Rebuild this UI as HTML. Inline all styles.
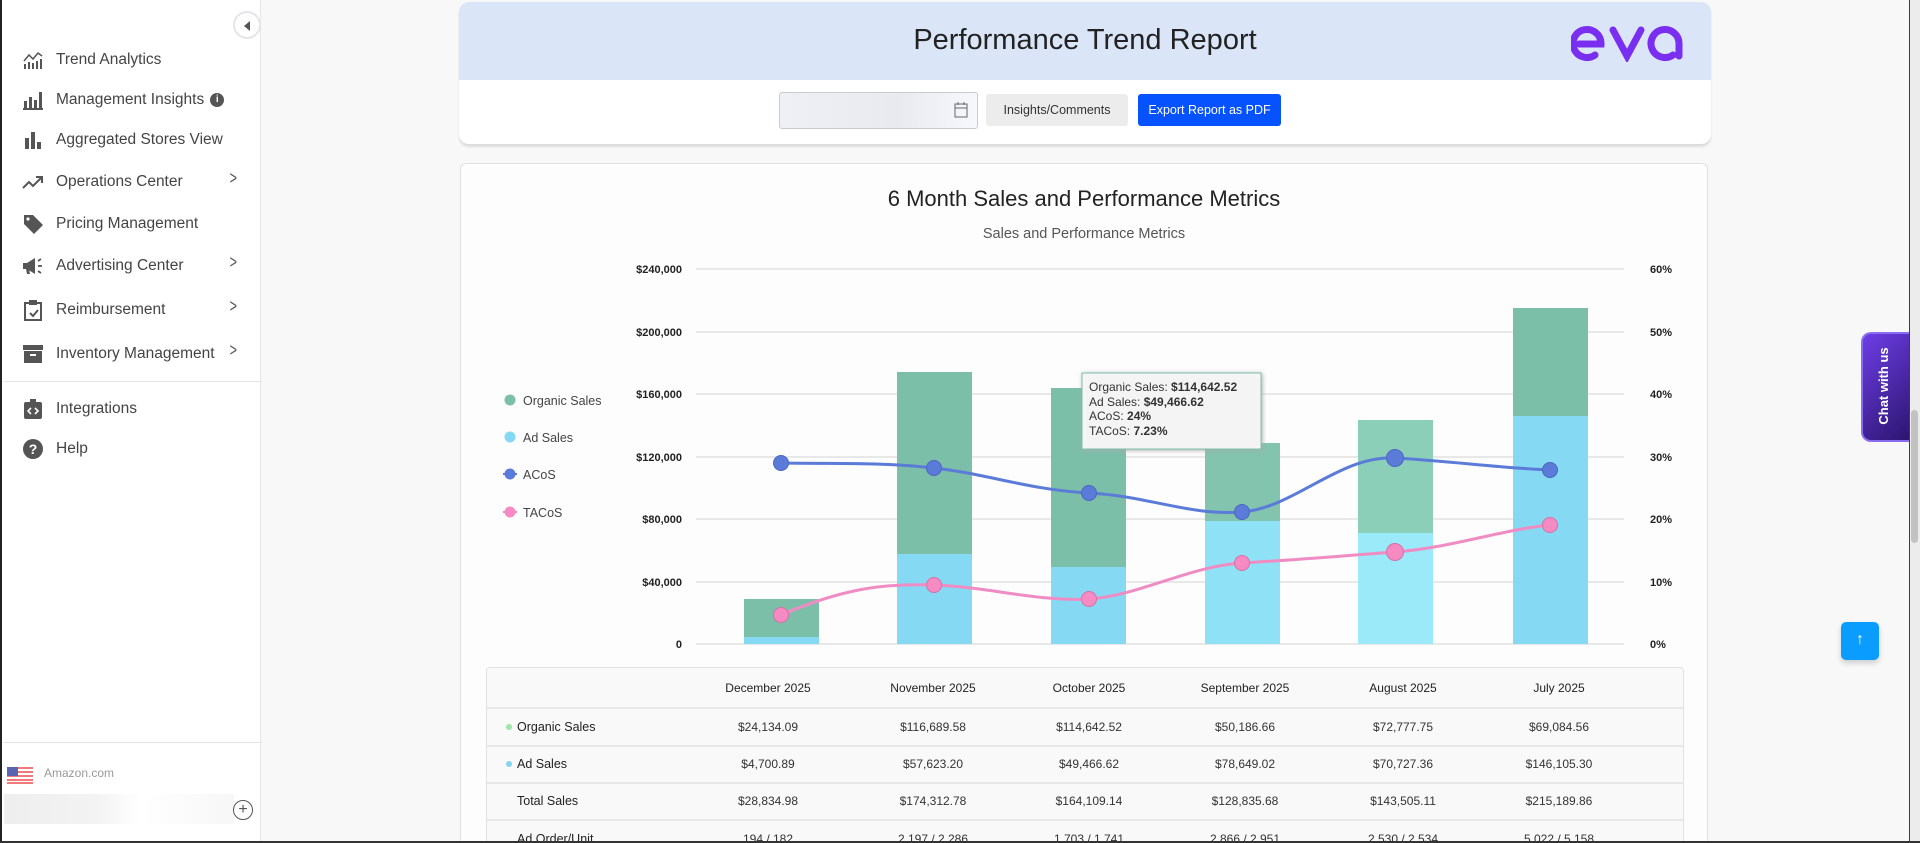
<!DOCTYPE html>
<html><head><meta charset="utf-8"><style>
*{box-sizing:border-box;margin:0;padding:0}
html,body{width:1920px;height:843px;overflow:hidden}
body{background:#f8f8f8;font-family:"Liberation Sans",sans-serif;color:#333;position:relative}
.side{position:absolute;left:0;top:0;width:261px;height:843px;background:#fff;border-left:2px solid #222;border-right:1px solid #e6e6e6}
.item{position:absolute;left:20px;display:flex;align-items:center;font-size:15.5px;color:#444;height:24px}
.item svg{width:22px;height:22px;margin-right:12px;fill:#555}
.chev{position:absolute;left:226px;font-size:18px;color:#555;transform:scaleX(.7)}
.abs{position:absolute}
</style></head><body>
<div class="side">
 <div class="abs" style="left:231px;top:11px;width:28px;height:28px;border-radius:50%;border:2px solid #e4e4ea;background:#fff"><div class="abs" style="left:9px;top:8px;border-right:6px solid #555;border-top:5px solid transparent;border-bottom:5px solid transparent"></div></div>
 <div class="item" style="top:48px"><svg viewBox="0 0 22 22"><path d="M2 12l5-6 4 4 5-6 4 3" stroke="#555" stroke-width="1.5" fill="none"/><rect x="2" y="15" width="2" height="5"/><rect x="6" y="13" width="2" height="7"/><rect x="10" y="14" width="2" height="6"/><rect x="14" y="12" width="2" height="8"/><rect x="18" y="10" width="2" height="10"/></svg>Trend Analytics</div>
 <div class="item" style="top:88px"><svg viewBox="0 0 22 22"><rect x="1" y="19" width="20" height="2"/><rect x="2" y="12" width="3" height="7"/><rect x="7" y="8" width="3" height="11"/><rect x="12" y="11" width="3" height="8"/><rect x="17" y="3" width="3" height="16"/></svg>Management Insights <span style="display:inline-block;width:14px;height:14px;border-radius:50%;background:#555;color:#fff;font-size:10px;text-align:center;line-height:14px;margin-left:6px;font-weight:bold">i</span></div>
 <div class="item" style="top:128px"><svg viewBox="0 0 22 22"><rect x="3" y="9" width="4" height="11"/><rect x="9" y="3" width="4" height="17"/><rect x="15" y="13" width="4" height="7"/></svg>Aggregated Stores View</div>
 <div class="item" style="top:170px"><svg viewBox="0 0 22 22"><path d="M1 17l6-6 4 4 8-8M14 6h6v6" stroke="#555" stroke-width="2" fill="none"/></svg>Operations Center</div><div class="chev" style="top:168px">&gt;</div>
 <div class="item" style="top:212px"><svg viewBox="0 0 22 22"><path d="M2 2h9l10 10-9 9L2 11z"/><circle cx="6" cy="6" r="1.6" fill="#fff"/></svg>Pricing Management</div>
 <div class="item" style="top:254px"><svg viewBox="0 0 22 22"><path d="M1 8h4l8-5v16l-8-5H1zM4 14h3l1 5H5z"/><path d="M16 11h4M16 6l3-2M16 16l3 2" stroke="#555" stroke-width="1.8"/></svg>Advertising Center</div><div class="chev" style="top:252px">&gt;</div>
 <div class="item" style="top:298px"><svg viewBox="0 0 22 22"><path d="M3 4h16v17H3z" stroke="#555" stroke-width="2" fill="none"/><rect x="7" y="1" width="8" height="5"/><path d="M8 14l3 3 5-6" stroke="#555" stroke-width="2" fill="none"/></svg>Reimbursement</div><div class="chev" style="top:296px">&gt;</div>
 <div class="item" style="top:342px"><svg viewBox="0 0 22 22"><rect x="1" y="2" width="20" height="5"/><rect x="2" y="8" width="18" height="12"/><rect x="8" y="11" width="6" height="2" fill="#fff"/></svg>Inventory Management</div><div class="chev" style="top:340px">&gt;</div>
 <div class="abs" style="left:2px;top:381px;width:258px;height:1px;background:#e3e3e3"></div>
 <div class="item" style="top:397px"><svg viewBox="0 0 22 22"><rect x="2" y="4" width="18" height="17" rx="2"/><rect x="8" y="1" width="6" height="4"/><path d="M9 10l-3 3 3 3M13 10l3 3-3 3" stroke="#fff" stroke-width="1.6" fill="none"/></svg>Integrations</div>
 <div class="item" style="top:437px"><svg viewBox="0 0 22 22"><circle cx="11" cy="11" r="10"/><text x="11" y="16" text-anchor="middle" font-size="14" font-weight="bold" fill="#fff" font-family="Liberation Sans">?</text></svg>Help</div>
 <div class="abs" style="left:2px;top:742px;width:258px;height:1px;background:#e3e3e3"></div>
 <svg class="abs" style="left:5px;top:767px" width="26" height="17" viewBox="0 0 26 17"><rect width="26" height="17" fill="#fff"/><g fill="#f07a7a"><rect y="0" width="26" height="2"/><rect y="4" width="26" height="2"/><rect y="8" width="26" height="2"/><rect y="12" width="26" height="2"/><rect y="15" width="26" height="2"/></g><rect width="11" height="9" fill="#5a63b0"/></svg>
 <div class="abs" style="left:42px;top:766px;font-size:12px;color:#999">Amazon.com</div>
 <div class="abs" style="left:2px;top:794px;width:230px;height:30px;background:linear-gradient(90deg,#eee,#f3f3f3 40%,#fff 60%,#f7f7f7)"></div>
 <div class="abs" style="left:231px;top:800px;width:20px;height:20px;border-radius:50%;border:1px solid #555;text-align:center;line-height:17px;font-size:16px;color:#555">+</div>
</div>

<div class="abs" style="left:459px;top:2px;width:1252px;height:142px;background:#fff;border-radius:10px;box-shadow:0 3px 2px #ddd">
 <div class="abs" style="left:0;top:0;width:1252px;height:78px;background:#dae6f8;border-radius:10px 10px 0 0"></div>
 <div class="abs" style="left:0;top:22px;width:1252px;text-align:center;font-size:29px;color:#222">Performance Trend Report</div>
 <svg class="abs" style="left:1112px;top:20px" width="120" height="40" viewBox="0 0 120 40"><g fill="none" stroke="#7a2ff0" stroke-width="7" stroke-linecap="round"><path d="M8 22h22a14 14 0 1 0-6 11"/><path d="M42 8l14 26 14-26"/><path d="M108 34V22a14 14 0 1 0-6 11"/></g></svg>
 <div class="abs" style="left:320px;top:90px;width:199px;height:37px;border:1px solid #ccc;border-radius:3px;background:linear-gradient(90deg,#eef0f4,#e8eaf0 60%,#f6f8fc)"></div>
 <svg class="abs" style="left:495px;top:100px" width="14" height="16" viewBox="0 0 14 16"><rect x="1" y="2" width="12" height="13" fill="none" stroke="#666"/><path d="M1 6h12M4 0v3M10 0v3" stroke="#666"/></svg>
 <div class="abs" style="left:527px;top:92px;width:142px;height:32px;background:#ececec;border-radius:3px;font-size:12.5px;color:#333;text-align:center;line-height:32px">Insights/Comments</div>
 <div class="abs" style="left:679px;top:92px;width:143px;height:32px;background:#0652ff;border-radius:3px;font-size:12.5px;color:#fff;text-align:center;line-height:32px">Export Report as PDF</div>
</div>

<div class="abs" style="left:460px;top:163px;width:1248px;height:690px;background:#fdfdfd;border:1px solid #e2e2e2;border-radius:6px"></div>
<div class="abs" style="left:460px;top:186px;width:1248px;text-align:center;font-size:22px;color:#222">6 Month Sales and Performance Metrics</div>
<div class="abs" style="left:460px;top:226px;width:1248px;text-align:center;font-size:14.5px;color:#555">Sales and Performance Metrics</div>

<svg class="abs" style="left:0;top:0" width="1920" height="843" font-family="Liberation Sans">
 <g stroke="#e2e2e2" stroke-width="1.5"><line x1="696" x2="1624" y1="269" y2="269"/><line x1="696" x2="1624" y1="332" y2="332"/><line x1="696" x2="1624" y1="394" y2="394"/><line x1="696" x2="1624" y1="457" y2="457"/><line x1="696" x2="1624" y1="519" y2="519"/><line x1="696" x2="1624" y1="582" y2="582"/><line x1="696" x2="1624" y1="644" y2="644"/></g>
 <g font-size="11" font-weight="bold" fill="#222" text-anchor="end"><text x="682" y="273">$240,000</text><text x="682" y="336">$200,000</text><text x="682" y="398">$160,000</text><text x="682" y="461">$120,000</text><text x="682" y="523">$80,000</text><text x="682" y="586">$40,000</text><text x="682" y="648">0</text></g>
 <g font-size="11" font-weight="bold" fill="#222"><text x="1650" y="273">60%</text><text x="1650" y="336">50%</text><text x="1650" y="398">40%</text><text x="1650" y="461">30%</text><text x="1650" y="523">20%</text><text x="1650" y="586">10%</text><text x="1650" y="648">0%</text></g>
 <g fill="#7bbfa9"><rect x="744" y="599" width="75" height="38"/><rect x="897" y="372" width="75" height="182"/><rect x="1051" y="388" width="75" height="179"/><rect x="1205" y="443" width="75" height="78" fill="#82c4ae"/><rect x="1358" y="420" width="75" height="113" fill="#8ccfb9"/><rect x="1513" y="308" width="75" height="108"/></g>
 <g fill="#86d9f2"><rect x="744" y="637" width="75" height="7"/><rect x="897" y="554" width="75" height="90"/><rect x="1051" y="567" width="75" height="77"/><rect x="1205" y="521" width="75" height="123" fill="#8fe2f6"/><rect x="1358" y="533" width="75" height="111" fill="#9aeafa"/><rect x="1513" y="416" width="75" height="228"/></g>
 <path d="M781 463C840 464 880 462 934 468S1030 490 1089 493S1190 516 1242 512S1340 455 1395 458S1500 468 1550 470" stroke="#5b7bd8" stroke-width="3" fill="none"/>
 <path d="M781 615C840 590 880 583 934 585S1040 602 1089 599S1190 566 1242 563S1340 556 1395 552S1500 530 1550 525" stroke="#f08cc4" stroke-width="3" fill="none"/>
 <g fill="#5b7bd8" stroke="#4a66c0"><circle cx="781" cy="463" r="7.5"/><circle cx="934" cy="468" r="7.5"/><circle cx="1089" cy="493" r="7.5"/><circle cx="1242" cy="512" r="7.5"/><circle cx="1395" cy="458" r="8.5"/><circle cx="1550" cy="470" r="7.5"/></g>
 <g fill="#f58bc2" stroke="#d86fa5"><circle cx="781" cy="615" r="7.5"/><circle cx="934" cy="585" r="7.5"/><circle cx="1089" cy="599" r="7.5"/><circle cx="1242" cy="563" r="7.5"/><circle cx="1395" cy="552" r="8.5"/><circle cx="1550" cy="525" r="7.5"/></g>
 <g font-size="12.5" fill="#444"><circle cx="510" cy="400" r="5.5" fill="#7bbfa9"/><text x="523" y="405">Organic Sales</text><circle cx="510" cy="437" r="5.5" fill="#86d9f2"/><text x="523" y="442">Ad Sales</text><circle cx="510" cy="474" r="5.5" fill="#5b7bd8"/><line x1="503" x2="517" y1="474" y2="474" stroke="#5b7bd8" stroke-width="2"/><text x="523" y="479">ACoS</text><circle cx="510" cy="512" r="5.5" fill="#f58bc2"/><line x1="503" x2="517" y1="512" y2="512" stroke="#f58bc2" stroke-width="2"/><text x="523" y="517">TACoS</text></g>
 <rect x="1082" y="373" width="179" height="76" fill="#f9f9f9" fill-opacity=".95" stroke="#7bbfa9" stroke-width="1" style="filter:drop-shadow(1px 1px 2px #aaa)"/>
 <g font-size="12" fill="#333"><text x="1089" y="391">Organic Sales: <tspan font-weight="bold">$114,642.52</tspan></text><text x="1089" y="406">Ad Sales: <tspan font-weight="bold">$49,466.62</tspan></text><text x="1089" y="420">ACoS: <tspan font-weight="bold">24%</tspan></text><text x="1089" y="435">TACoS: <tspan font-weight="bold">7.23%</tspan></text></g>
</svg>

<div class="abs" style="left:486px;top:667px;width:1198px;height:180px;background:#f9f9f9;border:1px solid #e2e2e2;border-radius:4px"></div>
<svg class="abs" style="left:0;top:0" width="1920" height="843" font-family="Liberation Sans">
 <g stroke="#e2e2e2" stroke-width="1.5"><line x1="487" x2="1683" y1="708" y2="708"/><line x1="487" x2="1683" y1="746" y2="746"/><line x1="487" x2="1683" y1="783" y2="783"/><line x1="487" x2="1683" y1="820" y2="820"/></g>
 <g font-size="12" fill="#222" text-anchor="middle"><text x="768" y="692">December 2025</text><text x="933" y="692">November 2025</text><text x="1089" y="692">October 2025</text><text x="1245" y="692">September 2025</text><text x="1403" y="692">August 2025</text><text x="1559" y="692">July 2025</text></g>
 <g font-size="12" fill="#333" text-anchor="middle">
  <text x="768" y="731">$24,134.09</text><text x="933" y="731">$116,689.58</text><text x="1089" y="731">$114,642.52</text><text x="1245" y="731">$50,186.66</text><text x="1403" y="731">$72,777.75</text><text x="1559" y="731">$69,084.56</text>
  <text x="768" y="768">$4,700.89</text><text x="933" y="768">$57,623.20</text><text x="1089" y="768">$49,466.62</text><text x="1245" y="768">$78,649.02</text><text x="1403" y="768">$70,727.36</text><text x="1559" y="768">$146,105.30</text>
  <text x="768" y="805">$28,834.98</text><text x="933" y="805">$174,312.78</text><text x="1089" y="805">$164,109.14</text><text x="1245" y="805">$128,835.68</text><text x="1403" y="805">$143,505.11</text><text x="1559" y="805">$215,189.86</text>
  <text x="768" y="843">194 / 182</text><text x="933" y="843">2,197 / 2,286</text><text x="1089" y="843">1,703 / 1,741</text><text x="1245" y="843">2,866 / 2,951</text><text x="1403" y="843">2,530 / 2,534</text><text x="1559" y="843">5,022 / 5,158</text>
 </g>
 <g font-size="12.5" fill="#222"><circle cx="509" cy="727" r="3" fill="#9be8a8"/><text x="517" y="731">Organic Sales</text><circle cx="509" cy="764" r="3" fill="#86d4f0"/><text x="517" y="768">Ad Sales</text><text x="517" y="805">Total Sales</text><text x="517" y="843">Ad Order/Unit</text></g>
</svg>

<div class="abs" style="left:1861px;top:332px;width:48px;height:110px;border-radius:10px 0 0 10px;background:linear-gradient(135deg,#6d3ee6,#2c1570);border:2px solid #8a6cf0;border-right:none"></div>
<div class="abs" style="left:1846px;top:376px;width:80px;height:20px;transform:rotate(-90deg);color:#fff;font-weight:bold;font-size:13px;text-align:center">Chat with us</div>
<div class="abs" style="left:1841px;top:622px;width:38px;height:38px;border-radius:5px;background:#0a9dff;color:#fff;text-align:center;line-height:36px;font-size:16px;font-weight:bold;box-shadow:0 3px 6px #ccc">↑</div>
<div class="abs" style="left:1909px;top:0;width:11px;height:843px;background:#ececec;border-left:1px solid #2a3a8a"></div>
<div class="abs" style="left:1911px;top:410px;width:7px;height:133px;background:#c2c2c2;border-radius:4px"></div>
<div class="abs" style="left:0;top:841px;width:1920px;height:2px;background:#333"></div>
</body></html>
